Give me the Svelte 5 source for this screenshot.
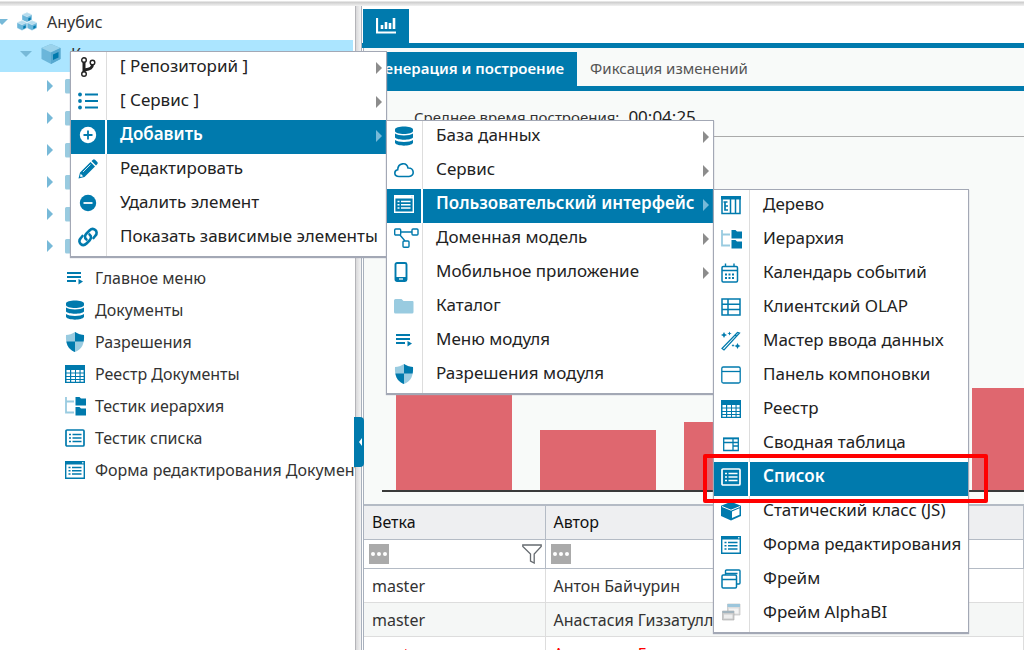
<script lang="ts">
  const tree = [
    { level: 0, arrow: 'open', icon: 'cubes', label: 'Анубис' },
    { level: 1, arrow: 'open', icon: 'module', label: 'К', selected: true },
    { level: 2, arrow: 'closed', icon: 'folder', label: '' },
    { level: 2, arrow: 'closed', icon: 'folder', label: '' },
    { level: 2, arrow: 'closed', icon: 'folder', label: '' },
    { level: 2, arrow: 'closed', icon: 'folder', label: '' },
    { level: 2, arrow: 'closed', icon: 'folder', label: '' },
    { level: 2, arrow: 'closed', icon: 'folder', label: '' },
    { level: 2, icon: 'menu', label: 'Главное меню' },
    { level: 2, icon: 'database', label: 'Документы' },
    { level: 2, icon: 'shield', label: 'Разрешения' },
    { level: 2, icon: 'registry', label: 'Реестр Документы' },
    { level: 2, icon: 'hierarchy', label: 'Тестик иерархия' },
    { level: 2, icon: 'list', label: 'Тестик списка' },
    { level: 2, icon: 'form', label: 'Форма редактирования Документы' }
  ];

  const uiMenu = [
    { icon: 'treegrid', label: 'Дерево' },
    { icon: 'hierarchy', label: 'Иерархия' },
    { icon: 'calendar', label: 'Календарь событий' },
    { icon: 'olap', label: 'Клиентский OLAP' },
    { icon: 'wand', label: 'Мастер ввода данных' },
    { icon: 'panel', label: 'Панель компоновки' },
    { icon: 'registry', label: 'Реестр' },
    { icon: 'pivot', label: 'Сводная таблица' },
    { icon: 'list', label: 'Список', active: true, marked: true },
    { icon: 'cube', label: 'Статический класс (JS)' },
    { icon: 'form', label: 'Форма редактирования' },
    { icon: 'frame', label: 'Фрейм' },
    { icon: 'frameBi', label: 'Фрейм AlphaBI' }
  ];

  const addMenu = [
    { icon: 'database', label: 'База данных', more: true },
    { icon: 'cloud', label: 'Сервис', more: true },
    { icon: 'form', label: 'Пользовательский интерфейс', more: true, active: true, children: uiMenu },
    { icon: 'domain', label: 'Доменная модель', more: true },
    { icon: 'mobile', label: 'Мобильное приложение', more: true },
    { icon: 'folder', label: 'Каталог' },
    { icon: 'menu', label: 'Меню модуля' },
    { icon: 'shield', label: 'Разрешения модуля' }
  ];

  const mainMenu = [
    { icon: 'branch', label: '[ Репозиторий ]', more: true },
    { icon: 'bullets', label: '[ Сервис ]', more: true },
    { icon: 'plus', label: 'Добавить', more: true, active: true, wide: true, children: addMenu },
    { icon: 'pencil', label: 'Редактировать' },
    { icon: 'minus', label: 'Удалить элемент' },
    { icon: 'link', label: 'Показать зависимые элементы' }
  ];

  const bars = [140, 60, 68, 90, 102];

  const rows = [
    { branch: 'master', author: 'Антон Байчурин' },
    { branch: 'master', author: 'Анастасия Гиззатуллина' },
    { branch: 'master', author: 'Анастасия Гиззатуллина', failed: true }
  ];
</script>

{#snippet icon(name)}
  <svg class="icon" viewBox="0 0 20 20" aria-hidden="true">
    {#if name === 'cubes'}
      <g stroke="#fff" stroke-width="0.4">
        <path fill="#6bb6da" d="M10 .5l5 2v5.500L10 10.500 5 8V2.500zM5 8.500l5 2V16l-5 2.500L0 16v-5.500zM15 8.500l5 2V16l-5 2.500-5-2.500v-5.500z" />
        <path fill="#b5dcee" d="M10 .5l5 2-5 2.300-5-2.300zM5 8.500l5 2-5 2.300-5-2.300zM15 8.500l5 2-5 2.300-5-2.300z" />
      </g>
      <path fill="#007aad" d="M11.300 6.300l2.400-1.100v2.500l-2.400 1.200zM6.300 14.300l2.400-1.100v2.500l-2.400 1.200zM16.300 14.300l2.400-1.100v2.500l-2.400 1.200z" />
    {:else if name === 'module'}
      <path fill="#6bb6da" d="M10 0l9.500 4v11L10 20 .5 15V4z" />
      <path fill="#9bd3ec" d="M10 0l9.500 4L10 8.500.5 4z" />
      <path fill="#58a9d0" d="M10 8.500L19.500 4v11L10 20z" />
      <path fill="#007aad" d="M12 10.500l5.500-2.500v5.500L12 16z" />
    {:else if name === 'folder'}
      <path fill="#99cbe0" d="M1.500 3h6l2 2h9q1 0 1 1v10q0 1.500-1.500 1.500H1.500Q0 17.500 0 16V4.500Q0 3 1.500 3z" />
    {:else if name === 'menu'}
      <path stroke="#007aad" stroke-width="1.800" d="M2 5h14M2 9h14M2 13h9" />
      <path fill="#007aad" d="M13.500 11l4.500 2.500-4.500 3z" />
    {:else if name === 'database'}
      <path fill="currentColor" d="M1 3.500C1-.5 19-.5 19 3.500v1.500c0 4-18 4-18 0zM1 7.500c3 2.500 15 2.500 18 0v4c-2 3-16 3-18 0zM1 14c3 2.500 15 2.500 18 0v3c-2 3.500-16 3.500-18 0z" />
    {:else if name === 'shield'}
      <path fill="#99cbe0" d="M10 0C7 2 4 3 1 3c-.5 8 1.500 14 9 17 7.500-3 9.500-9 9-17-3 0-6-1-9-3z" />
      <path fill="#007aad" d="M10 0c3 2 6 3 9 3 .2 2.500 0 5-.4 6.500H10zM1.400 9.500H10V20C5 18 2.200 14.500 1.400 9.500z" />
    {:else if name === 'registry'}
      <path fill="#007aad" d="M0 1h20v18H0z" />
      <path fill="#fff" d="M1.500 6h3.500v2.500H1.500zM6.200 6H10v2.500H6.200zM11 6h3.500v2.500H11zM15.600 6h3v2.500h-3zM1.500 9.500h3.500V12H1.500zM6.200 9.500H10V12H6.200zM11 9.500h3.500V12H11zM15.600 9.500h3V12h-3zM1.500 13h3.500v2H1.500zM6.200 13H10v2H6.200zM11 13h3.500v2H11zM15.600 13h3v2h-3zM1.500 16h3.500v1.800H1.500zM6.200 16H10v1.800H6.200zM11 16h3.500v1.800H11zM15.600 16h3v1.800h-3z" />
    {:else if name === 'hierarchy'}
      <path fill="none" stroke="#99cbe0" stroke-width="1.800" d="M1 1v15.500h8M1 5.500h8" />
      <path fill="#007aad" d="M10.500 1h4L16 2.500h5V9.500H10.500zM10.500 11h4l1.500 1.500h5V19.500H10.500z" />
    {:else if name === 'list'}
      <rect x="1" y="2" width="18" height="16" rx="1" fill="none" stroke="currentColor" stroke-width="1.700" />
      <path stroke="currentColor" stroke-width="1.600" d="M4 6.500h2M7.500 6.500h9M4 10h2M7.500 10h9M4 13.500h2M7.500 13.500h9" />
    {:else if name === 'form'}
      <path fill="none" stroke="currentColor" stroke-width="1.400" d="M.7 2v16.300h18.600V2" />
      <path fill="currentColor" d="M0 1h20v3.500H0z" />
      <path stroke="currentColor" stroke-width="1.600" d="M3.500 7.500h2M7 7.500h9.500M3.500 10.700h2M7 10.700h9.500M3.500 14h2M7 14h9.500" />
      <path fill="#cce5f0" d="M17 2h1.500v1.500H17z" />
    {:else if name === 'branch'}
      <g fill="none" stroke="#222">
        <path stroke-width="3" d="M6 5v11M14.500 7c0 4-2 5-8 6" />
        <g fill="#fff" stroke-width="1.400">
          <circle cx="6" cy="3" r="2.300" />
          <circle cx="14.500" cy="5.500" r="2.300" />
          <circle cx="6" cy="17" r="2.300" />
        </g>
      </g>
    {:else if name === 'bullets'}
      <path stroke="#007aad" stroke-width="2.200" d="M7 3.500h13M7 10h13M7 16.500h13" />
      <g fill="#007aad">
        <circle cx="2" cy="3.500" r="1.900" />
        <circle cx="2" cy="10" r="1.900" />
        <circle cx="2" cy="16.500" r="1.900" />
      </g>
    {:else if name === 'plus'}
      <circle cx="10" cy="10" r="8.200" fill="#fff" />
      <path stroke="#007aad" stroke-width="1.800" d="M5.500 10h9M10 5.500v9" />
    {:else if name === 'minus'}
      <circle cx="10" cy="10" r="8.200" fill="#007aad" />
      <path stroke="#fff" stroke-width="1.800" d="M5.500 10h9" />
    {:else if name === 'pencil'}
      <path fill="#007aad" d="M.5 19.500l1.500-6L12.500 3l4.500 4.500L6.500 18zM13.500 2L15 .7q1-.7 2 .1l2.300 2.300q1 1 .1 2L18 6.500z" />
      <path fill="#fff" d="M2.700 14.800l2.500 2.500-2.500.6-.6-.6z" />
      <path stroke="#fff" stroke-width="0.800" d="M5 13l7.500-7.500" />
    {:else if name === 'link'}
      <g fill="none" stroke="#007aad" stroke-width="2.600" stroke-linecap="round">
        <path d="M8.500 12.500C6 10.500 7 8 8.500 6.500l3-3c4-4 9.500 1.200 6 5L15.500 11" />
        <path d="M11.500 7.500c2.500 2 1.500 4.500 0 6l-3 3c-4 4-9.500-1.200-6-5L4.500 9" />
      </g>
    {:else if name === 'cloud'}
      <path fill="none" stroke="#007aad" stroke-width="1.600" d="M5 16.500C-.5 16.500-.2 10.500 3.700 9.800 4 3 12.500 1.500 14 8c6.500-.5 7 8.500 1 8.500z" />
    {:else if name === 'mobile'}
      <rect x="1.500" y="1" width="11" height="18" rx="1.500" fill="none" stroke="#007aad" stroke-width="1.900" />
      <path fill="#007aad" d="M1.500 15h11v4h-11z" />
      <path stroke="#fff" stroke-width="1.200" d="M5 17h4" />
    {:else if name === 'treegrid'}
      <path fill="none" stroke="#007aad" stroke-width="1.500" d="M1 2v16.500h18V2M9.500 4v14M14.500 4v14" />
      <path fill="#007aad" d="M0 1h20v3.500H0z" />
      <path fill="none" stroke="#007aad" stroke-width="1.700" d="M2.500 7h4M4 7v8h3M4 11h3" />
    {:else if name === 'calendar'}
      <rect x="1" y="3.500" width="15.500" height="15.500" rx="1.200" fill="none" stroke="#007aad" stroke-width="1.500" />
      <path stroke="#007aad" stroke-width="1.400" d="M1 7.500h15.500M4.500 .5v3M13 .5v3" />
      <path stroke="#007aad" stroke-width="2" stroke-dasharray="2 1.500" d="M4 11.500h9.500M4 15h9.500" />
    {:else if name === 'olap'}
      <path fill="none" stroke="#007aad" stroke-width="1.500" d="M1 2h18v16H1zM1 7.300h18M1 12.600h18M7 2v16" />
    {:else if name === 'wand'}
      <path fill="none" stroke="#007aad" stroke-width="1.200" d="M1 17.500L16.500 1.500l2 .5L3 19zM14 4l2 1.500" />
      <path fill="#007aad" d="M3 1l1 2 2 1-2 1-1 2-1-2-2-1 2-1zM16.500 12l1 2 2 1-2 1-1 2-1-2-2-1 2-1zM8.500.5L9.200 2l1.500.5L9.200 3l-.7 1.500L7.800 3l-1.500-.5L7.800 2zM12 13l.5 1 1 .5-1 .5-.5 1-.5-1-1-.5 1-.5z" />
    {:else if name === 'panel'}
      <rect x=".8" y="2" width="18.400" height="16" rx="1.500" fill="none" stroke="#007aad" stroke-width="1.300" />
      <path stroke="#007aad" stroke-width="1.300" d="M1 6.500h18" />
    {:else if name === 'pivot'}
      <path fill="none" stroke="#007aad" stroke-width="1.300" d="M2.700 5.500h14.600v12H2.700zM2.700 9.500h14.600M12 6v11.500M12 13h5" />
      <path fill="#007aad" d="M2 4.500h16v1.600H2z" />
    {:else if name === 'cube'}
      <path fill="#007aad" d="M10 .7l10 4V15l-10 4.500L0 15V4.700z" />
      <path fill="#fff" d="M11 10.500l7.500-3.300v6.500L11 17z" />
      <path fill="none" stroke="#fff" stroke-width="1" d="M1 5.500l9 3.700 9-3.700" />
    {:else if name === 'frame'}
      <rect x="1" y="6" width="14.500" height="13" rx="1.200" fill="none" stroke="#007aad" stroke-width="1.500" />
      <path fill="none" stroke="#007aad" stroke-width="1.400" d="M1 10.500h14.500M4.500 6V2q0-1 1-1H18q1 0 1 1v12q0 1-1 1h-2.500M5 4.500h11.500" />
    {:else if name === 'frameBi'}
      <path fill="#ddd" stroke="#bbb" stroke-width=".6" d="M6.500 1h12.500v11H6.500z" />
      <path fill="#9cc6dc" d="M6.500 1h12.500v3H6.500z" />
      <path fill="#f4f4f4" d="M8 5.500h9.500v5H8z" />
      <path fill="#ccc" stroke="#aaa" stroke-width=".6" d="M1.500 8H13v9H1.500z" />
      <path fill="#a3b4be" d="M1.500 8H13v2H1.500z" />
      <path fill="#eee" d="M3 11.500h8.500v4H3z" />
    {:else if name === 'domain'}
      <g fill="none" stroke="#007aad" stroke-width="1.400">
        <rect x=".7" y="1" width="6" height="6" rx="1" />
        <rect x="18" y="1" width="6" height="6" rx="1" />
        <rect x="9" y="13" width="6" height="6.300" rx="1" />
        <path d="M6.700 4h11.300M6 7l5 6" />
      </g>
    {/if}
  </svg>
{/snippet}

{#snippet menu(items)}
  {#each items as item}
    <li class="item" class:active={item.active}>
      <button type="button">
        <span class="item-icon">{@render icon(item.icon)}</span>
        <span class="item-label">{item.label}</span>
        {#if item.more}<span class="more"></span>{/if}
      </button>
      {#if item.marked}<span class="mark"></span>{/if}
      {#if item.children}
        <ul class="menu submenu" class:wide={item.wide}>
          {@render menu(item.children)}
        </ul>
      {/if}
    </li>
  {/each}
{/snippet}

<div class="page">
  <header></header>
  <div class="workspace">
    <aside>
      <ul class="tree">
        {#each tree as node}
          <li class="node level-{node.level}" class:selected={node.selected}>
            <span class="arrow {node.arrow}"></span>
            {@render icon(node.icon)}
            <span class="node-label">{node.label}</span>
          </li>
        {/each}
      </ul>
    </aside>

    <div class="splitter">
      <button type="button" class="collapse" aria-label="Свернуть"></button>
    </div>

    <main>
      <div class="top-tabs">
        <button type="button" aria-label="Статистика">
          <svg viewBox="0 0 20 16" aria-hidden="true">
            <path fill="none" stroke="#fff" stroke-width="2.200" d="M1 0v14.500h19" />
            <path stroke="#fff" stroke-width="2.600" d="M6 7v4M10 4v7M14 5v6M18 0v11" />
          </svg>
        </button>
      </div>

      <div class="content">
        <nav class="tabs">
          <button type="button" class="current">Генерация и построение</button>
          <button type="button">Фиксация изменений</button>
        </nav>

        <p class="summary">
          <span>Среднее время построения:</span>
          <span class="time">00:04:25</span>
        </p>

        <div class="chart">
          {#each bars as value}
            <div class="bar" style="height: {value}px"></div>
          {/each}
        </div>

        <table>
          <thead>
            <tr>
              <th>Ветка</th>
              <th>Автор</th>
            </tr>
            <tr class="filters">
              <td>
                <div class="filter">
                  <button type="button" class="dots" aria-label="Условие"><i></i><i></i><i></i></button>
                  <svg class="funnel" viewBox="0 0 20 20" aria-hidden="true">
                    <path fill="#fff" stroke="#666b70" stroke-width="1.300" d="M.8 1h18.400v1.500l-7 7.500v9L8.500 17v-7L.8 2.500z" />
                  </svg>
                </div>
              </td>
              <td>
                <div class="filter">
                  <button type="button" class="dots" aria-label="Условие"><i></i><i></i><i></i></button>
                </div>
              </td>
            </tr>
          </thead>
          <tbody>
            {#each rows as row}
              <tr class:failed={row.failed}>
                <td>{row.branch}</td>
                <td>{row.author}</td>
              </tr>
            {/each}
          </tbody>
        </table>
      </div>
    </main>
  </div>

  <ul class="menu context">
    {@render menu(mainMenu)}
  </ul>
</div>

<style>
  :global(body) {
    margin: 0;
    background: #fff;
  }
  .page {
    position: relative;
    display: flex;
    flex-direction: column;
    height: 100vh;
    overflow: hidden;
    font-family: 'Noto Sans', 'Open Sans', sans-serif;
    font-size: 16px;
    color: #333;
  }
  button {
    margin: 0;
    padding: 0;
    border: 0;
    background: none;
    font: inherit;
    color: inherit;
    cursor: pointer;
  }
  ul {
    list-style: none;
    margin: 0;
    padding: 0;
  }
  header {
    flex: none;
    height: 6px;
    background: linear-gradient(#fff 1px, #ccc 2px, #f2f2f2 6px);
  }
  .workspace {
    flex: 1;
    display: flex;
    min-height: 0;
  }
  .icon {
    flex: none;
    width: 20px;
    height: 20px;
    overflow: visible;
    color: #007aad;
  }

  aside {
    flex: none;
    width: 355px;
    overflow: hidden;
  }
  .tree {
    padding-top: 2px;
    margin-right: 2px;
  }
  .node {
    display: flex;
    align-items: center;
    box-sizing: border-box;
    height: 32px;
    padding-bottom: 4px;
    white-space: nowrap;
  }
  .node.selected {
    background: #abe5ff;
  }
  .node .icon {
    margin: 0 10px 0 6px;
  }
  .level-1 {
    padding-left: 24px;
  }
  .level-2 {
    padding-left: 48px;
  }
  .arrow {
    flex: none;
    width: 11px;
    height: 12px;
  }
  .arrow.open::before,
  .arrow.closed::before {
    content: '';
    display: block;
    background: #77b9d8;
  }
  .arrow.open::before {
    width: 12px;
    height: 6px;
    margin: 3px 0 0 -4px;
    clip-path: polygon(0 0, 100% 0, 50% 100%);
  }
  .arrow.closed::before {
    width: 6px;
    height: 12px;
    margin-left: -1px;
    clip-path: polygon(0 0, 100% 50%, 0 100%);
  }

  .splitter {
    position: relative;
    flex: none;
    box-sizing: border-box;
    width: 7px;
    border-left: 1px solid #b4b4b8;
    border-right: 1px solid #a9b1bd;
    background: linear-gradient(to right, #d8d8da, #f4f4f4);
  }
  .collapse {
    position: absolute;
    top: 411px;
    left: -2px;
    width: 10px;
    height: 50px;
    border-radius: 0 4px 4px 0;
    background: #007aad;
    z-index: 1;
  }
  .collapse::before {
    content: '';
    display: block;
    width: 3px;
    height: 8px;
    margin-left: 5px;
    background: #fff;
    clip-path: polygon(100% 0, 100% 100%, 0 50%);
  }

  main {
    flex: 1;
    display: flex;
    flex-direction: column;
    min-width: 0;
  }
  .top-tabs {
    flex: none;
    padding: 3px 0 0 1px;
    border-bottom: 5px solid #007aad;
  }
  .top-tabs button {
    display: flex;
    align-items: center;
    justify-content: center;
    width: 46px;
    height: 34px;
    background: #007aad;
  }
  .top-tabs svg {
    width: 20px;
    height: 16px;
  }
  .content {
    flex: 1;
    margin-left: 1px;
    padding-top: 4px;
    border-left: 1px solid #a9b1bd;
    background: #f8faf9;
  }
  .tabs {
    display: flex;
    border-bottom: 5px solid #007aad;
    font-size: 15px;
  }
  .tabs button {
    height: 34px;
    padding: 0 13px 2px;
    color: #555;
  }
  .tabs .current {
    background: #007aad;
    color: #fff;
    font-weight: 600;
  }
  .summary {
    display: flex;
    align-items: center;
    gap: 9px;
    height: 46px;
    margin: 0;
    padding: 6px 0 0 50px;
    box-sizing: border-box;
    border-bottom: 1px solid #aaa;
    font-size: 15px;
  }
  .time {
    font-size: 17px;
    color: #222;
  }
  .chart {
    display: flex;
    align-items: flex-end;
    gap: 28px;
    height: 353px;
    margin-left: 18px;
    padding-left: 14px;
    border-bottom: 2px solid #3a3a3a;
    overflow: hidden;
  }
  .bar {
    flex: none;
    width: 116px;
    background: #df676f;
  }
  table {
    width: 100%;
    margin-top: 12px;
    border-collapse: collapse;
    border-top: 2px solid #b4bbc5;
    table-layout: fixed;
    background: #fff;
  }
  th,
  td {
    box-sizing: border-box;
    height: 34px;
    padding: 0 8px;
    text-align: left;
    font-weight: 400;
    white-space: nowrap;
    border-bottom: 1px solid #ddd;
    border-right: 1px solid #ddd;
  }
  tbody td {
    padding-top: 2px;
  }
  th {
    background: #eeeff1;
    color: #111;
    border-color: #b4bbc5;
  }
  th:first-child {
    width: 181px;
  }
  .filters td {
    height: 29px;
    padding: 0 3px 0 5px;
    border-color: #b4bbc5;
  }
  .filter {
    display: flex;
    align-items: center;
    justify-content: space-between;
  }
  .dots {
    display: flex;
    align-items: center;
    justify-content: center;
    gap: 2px;
    width: 20px;
    height: 20px;
    background: #aaa;
  }
  .dots i {
    width: 4px;
    height: 4px;
    border-radius: 2px;
    background: #fff;
  }
  .funnel {
    width: 20px;
    height: 20px;
  }
  tbody tr:nth-child(even) {
    background: #f5f7f6;
  }
  .failed {
    color: #f00;
  }

  .menu {
    position: absolute;
    box-sizing: border-box;
    background: #fff;
    border: 1px solid #a3a8b5;
    box-shadow: 0 1px 1px #a3a8b5;
    font-size: 17px;
    color: #222;
    z-index: 2;
  }
  .context {
    top: 51px;
    left: 70px;
    width: 317px;
  }
  .submenu {
    top: 0;
    left: 100%;
    width: 256px;
  }
  .submenu.wide {
    width: 328px;
  }
  .item {
    position: relative;
  }
  .item > button {
    display: flex;
    width: 100%;
    height: 34px;
    text-align: left;
    white-space: nowrap;
  }
  .item-icon {
    flex: none;
    display: flex;
    align-items: center;
    box-sizing: border-box;
    width: 36px;
    height: 34px;
    padding: 0 0 4px 7px;
    border-right: 1px solid #ddd;
  }
  .item-label {
    flex: 1;
    padding-left: 13px;
    line-height: 28px;
  }
  .more {
    width: 6px;
    height: 12px;
    margin: 10px 4px 0 -10px;
    background: #8c8c8c;
    clip-path: polygon(0 0, 100% 50%, 0 100%);
  }
  .active > button {
    background: #007aad;
    color: #fff;
    font-weight: 600;
  }
  .active > button .item-icon {
    border-right: 2px solid #fff;
  }
  .active > button .icon {
    color: #fff;
  }
  .active > button .more {
    background: #77b9d8;
  }
  .mark {
    position: absolute;
    top: -8px;
    right: -20px;
    bottom: -7px;
    left: -11px;
    border: 4px solid #f00;
    border-radius: 2px;
    pointer-events: none;
    z-index: 3;
  }
</style>
